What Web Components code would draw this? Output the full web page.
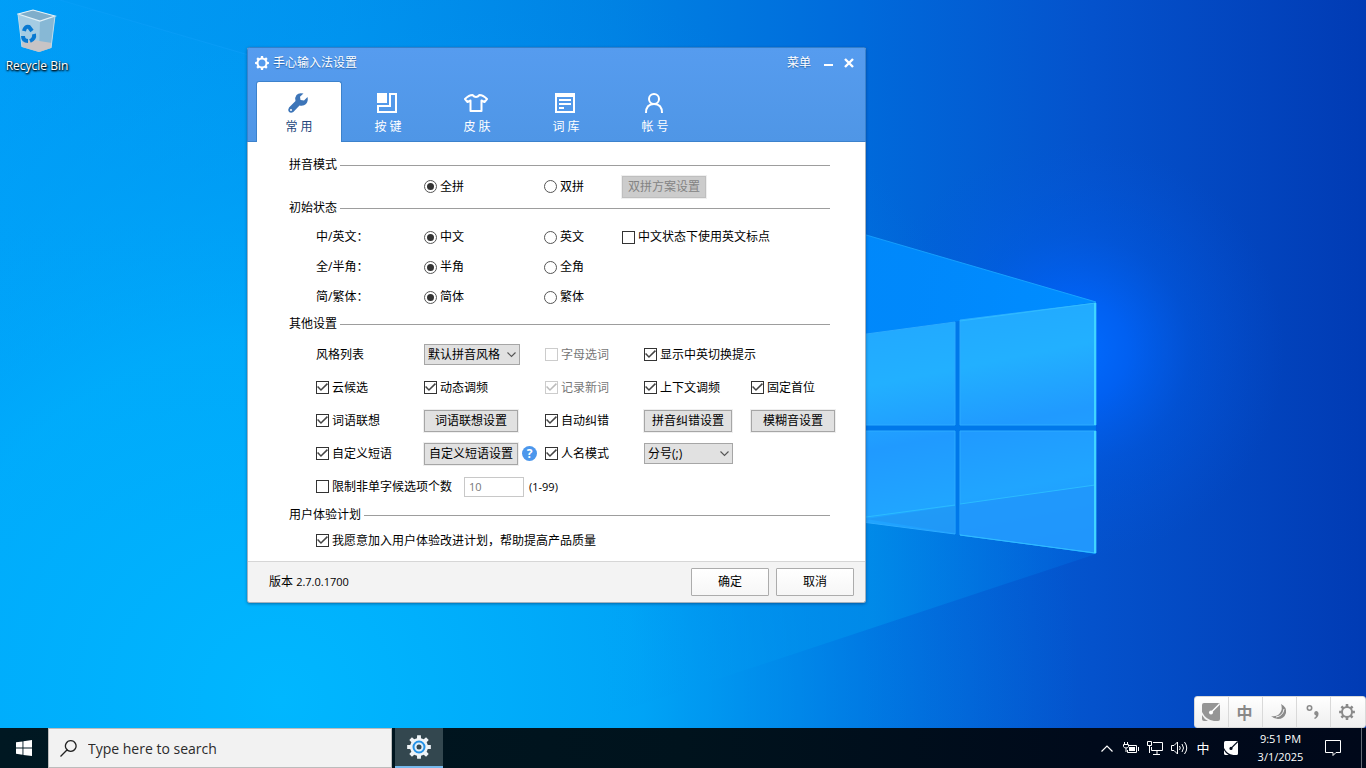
<!DOCTYPE html>
<html lang="zh-CN">
<head>
<meta charset="utf-8">
<title>手心输入法设置</title>
<style>
    html, body {
        height: 100%;
        margin: 0;
    }

    body {
        font-family: "Open Sans", "Noto Sans CJK SC", sans-serif;
        font-size: 12px;
        overflow: hidden;
    }

    .latin { font-size: 11px; }
</style>
</head>
<body>

<desktop-shell>
    <desktop-wallpaper slot="wallpaper"></desktop-wallpaper>
    <desktop-icon slot="icons">Recycle Bin</desktop-icon>

    <settings-window slot="windows">
        <span slot="title">手心输入法设置</span>
        <tab-item slot="tabs" icon="wrench" selected>常 用</tab-item>
        <tab-item slot="tabs" icon="keys">按 键</tab-item>
        <tab-item slot="tabs" icon="shirt">皮 肤</tab-item>
        <tab-item slot="tabs" icon="book">词 库</tab-item>
        <tab-item slot="tabs" icon="user">帐 号</tab-item>

        <settings-group heading="拼音模式">
            <settings-row size="small">
                <span></span>
                <choice-box type="radio" name="mode" checked>全拼</choice-box>
                <choice-box type="radio" name="mode">双拼</choice-box>
                <push-button size="m" disabled>双拼方案设置</push-button>
            </settings-row>
        </settings-group>

        <settings-group heading="初始状态" spaced>
            <settings-row size="medium">
                <span>中/英文：</span>
                <choice-box type="radio" name="lang" checked>中文</choice-box>
                <choice-box type="radio" name="lang">英文</choice-box>
                <choice-box>中文状态下使用英文标点</choice-box>
            </settings-row>
            <settings-row size="medium">
                <span>全/半角：</span>
                <choice-box type="radio" name="width" checked>半角</choice-box>
                <choice-box type="radio" name="width">全角</choice-box>
            </settings-row>
            <settings-row size="medium">
                <span>简/繁体：</span>
                <choice-box type="radio" name="script" checked>简体</choice-box>
                <choice-box type="radio" name="script">繁体</choice-box>
            </settings-row>
        </settings-group>

        <settings-group heading="其他设置" spaced>
            <settings-row columns="five">
                <span>风格列表</span>
                <drop-down label="风格列表" options="默认拼音风格" size="l"></drop-down>
                <choice-box disabled>字母选词</choice-box>
                <choice-box checked>显示中英切换提示</choice-box>
            </settings-row>
            <settings-row columns="five">
                <choice-box checked>云候选</choice-box>
                <choice-box checked>动态调频</choice-box>
                <choice-box checked disabled>记录新词</choice-box>
                <choice-box checked>上下文调频</choice-box>
                <choice-box checked>固定首位</choice-box>
            </settings-row>
            <settings-row columns="five">
                <choice-box checked>词语联想</choice-box>
                <push-button size="l">词语联想设置</push-button>
                <choice-box checked>自动纠错</choice-box>
                <push-button>拼音纠错设置</push-button>
                <push-button size="m">模糊音设置</push-button>
            </settings-row>
            <settings-row columns="five">
                <choice-box checked>自定义短语</choice-box>
                <push-button size="l" help>自定义短语设置</push-button>
                <choice-box checked>人名模式</choice-box>
                <drop-down label="人名模式" options="分号(;)"></drop-down>
            </settings-row>
            <settings-row columns="fields">
                <choice-box>限制非单字候选项个数</choice-box>
                <number-field label="限制非单字候选项个数" value="10"></number-field>
                <span class="latin">(1-99)</span>
            </settings-row>
        </settings-group>

        <settings-group heading="用户体验计划">
            <settings-row columns="one">
                <choice-box checked>我愿意加入用户体验改进计划，帮助提高产品质量</choice-box>
            </settings-row>
        </settings-group>

        <span slot="version">版本 <span class="latin">2.7.0.1700</span></span>
        <dialog-button slot="actions">确定</dialog-button>
        <dialog-button slot="actions">取消</dialog-button>
    </settings-window>

    <ime-bar slot="windows"></ime-bar>
    <task-bar slot="taskbar"></task-bar>
</desktop-shell>

<script>
const base = /*css*/`
    * { box-sizing: border-box; }
    button, input, select { font: inherit; color: inherit; margin: 0; }
    svg { display: block; flex: none; }
`;

const define = (name, render, ready) => {
    customElements.define(name, class extends HTMLElement {
        constructor() {
            super();
            this.attachShadow({mode: "open"});
        }
        connectedCallback() {
            this.shadowRoot.innerHTML = render(this);
            if (ready) ready(this);
        }
    });
};

/* toothed wheel, used at several sizes */
const gearPath = (teeth, outer, inner, cx, cy) => {
    const pts = [];
    const step = Math.PI * 2 / teeth;
    for (let i = 0; i < teeth; i++) {
        const mid = i * step - Math.PI / 2;
        [[-0.29, inner], [-0.2, outer], [0.2, outer], [0.29, inner]].forEach(([t, r]) => {
            const a = mid + t * step;
            pts.push(`${(cx + r * Math.cos(a)).toFixed(2)} ${(cy + r * Math.sin(a)).toFixed(2)}`);
        });
    }
    return `M${pts.join("L")}Z`;
};

const imeLogo = (size, fill, cut) => `
    <svg width="${size}" height="${size}" viewBox="0 0 18 18">
        <path fill="${fill}" d="M2 0H16Q18 0 18 2V16Q18 18 16 18H12Q4 17 0 9V2Q0 0 2 0Z"/>
        <path fill="${fill}" d="M0 12Q2 16 6 18H2Q0 18 0 16Z"/>
        <circle cx="9" cy="9.500" r="2" fill="${cut}"/>
        <path stroke="${cut}" stroke-width="1.500" d="M9 9.500L17.500 1"/>
    </svg>`;

define("desktop-shell", () => `
    <style>
        ${base}
        :host {
            display: flex;
            flex-direction: column;
            height: 100vh;
            position: relative;
        }
        .area { flex: 1; min-height: 0; }
    </style>
    <slot name="wallpaper"></slot>
    <div class="area">
        <slot name="icons"></slot>
        <slot name="windows"></slot>
    </div>
    <slot name="taskbar"></slot>
`);

define("desktop-wallpaper", () => `
    <style>
        :host { position: absolute; inset: 0; z-index: -1; }
        svg { width: 100%; height: 100%; display: block; }
    </style>
    <svg viewBox="0 0 1366 768" preserveAspectRatio="xMidYMid slice">
        <defs>
            <linearGradient id="sky" x1="0" y1="0" x2="1366" y2="0" gradientUnits="userSpaceOnUse">
                <stop offset="0" stop-color="#009ff7"/>
                <stop offset=".25" stop-color="#0094ee"/>
                <stop offset=".45" stop-color="#0082e3"/>
                <stop offset=".63" stop-color="#006adb"/>
                <stop offset=".8" stop-color="#0452cc"/>
                <stop offset="1" stop-color="#013bb4"/>
            </linearGradient>
            <radialGradient id="pool" cx="280" cy="700" r="800" gradientUnits="userSpaceOnUse">
                <stop offset="0" stop-color="#00b7ff"/>
                <stop offset=".45" stop-color="#00b0fd" stop-opacity=".75"/>
                <stop offset=".75" stop-color="#009cf5" stop-opacity=".3"/>
                <stop offset="1" stop-color="#0080ee" stop-opacity="0"/>
            </radialGradient>
            <radialGradient id="glow" cx="1075" cy="350" r="210" gradientUnits="userSpaceOnUse">
                <stop offset="0" stop-color="#006cff"/>
                <stop offset=".25" stop-color="#0066ff" stop-opacity=".75"/>
                <stop offset=".55" stop-color="#0060f4" stop-opacity=".3"/>
                <stop offset="1" stop-color="#0058e0" stop-opacity="0"/>
            </radialGradient>
            <linearGradient id="beam" x1="1096" y1="0" x2="300" y2="0" gradientUnits="userSpaceOnUse">
                <stop offset="0" stop-color="#008dff"/>
                <stop offset=".35" stop-color="#008cff" stop-opacity=".85"/>
                <stop offset="1" stop-color="#00a8ff" stop-opacity=".1"/>
            </linearGradient>
            <linearGradient id="low" x1="1096" y1="0" x2="600" y2="0" gradientUnits="userSpaceOnUse">
                <stop offset="0" stop-color="#0068e0" stop-opacity=".4"/>
                <stop offset=".45" stop-color="#008eea" stop-opacity=".8"/>
                <stop offset="1" stop-color="#00a0f5" stop-opacity="0"/>
            </linearGradient>
            <linearGradient id="pane" x1="960" y1="302" x2="1010" y2="554" gradientUnits="userSpaceOnUse">
                <stop offset="0" stop-color="#22a8ff"/>
                <stop offset=".25" stop-color="#22b0ff"/>
                <stop offset=".5" stop-color="#209aff"/>
                <stop offset=".75" stop-color="#20a5ff"/>
                <stop offset="1" stop-color="#2096fc"/>
            </linearGradient>
            <linearGradient id="ray" x1="1096" y1="302" x2="60" y2="0" gradientUnits="userSpaceOnUse">
                <stop offset="0" stop-color="#18a4ff"/>
                <stop offset="1" stop-color="#18a4ff" stop-opacity=".2"/>
            </linearGradient>
        </defs>
        <rect width="1366" height="768" fill="url(#sky)"/>
        <rect width="1366" height="768" fill="url(#pool)"/>
        <rect width="1366" height="768" fill="url(#glow)"/>
        <path fill="url(#beam)" d="M1096 302L60 0H0V520H866L1096 554Z"/>
        <path fill="url(#low)" d="M1096 554L866 520L600 560V718Z"/>
        <path fill="none" stroke="url(#ray)" d="M1096 302L60 0"/>
        <path fill="#0078ea" d="M866 334L1096 302V554L866 522Z"/>
        <g fill="url(#pane)" stroke="#2cabff">
            <path d="M800 343L955 322V425H800Z"/>
            <path d="M960 320L1096 303V425H960Z"/>
            <path d="M800 431H955V534L800 514Z"/>
            <path d="M960 431H1096V553L960 535Z"/>
        </g>
        <path fill="#2196f3" fill-opacity=".7" d="M866 519L955 506V533Z"/>
        <path fill="#2196fb" fill-opacity=".8" d="M960 504L1095 485V552L960 534Z"/>
        <path fill="none" stroke="#2bbcff" d="M866 517L955 505M960 504L1095 485"/>
        <path fill="none" stroke="#30bcff" d="M960 321L1096 303M1095 553L960 535"/>
        <path fill="none" stroke="#40d4ff" stroke-width="2" d="M1095 303V425M1095 431V553"/>
    </svg>
`);

define("desktop-icon", () => `
    <style>
        :host {
            display: flex;
            flex-direction: column;
            align-items: center;
            gap: 3px;
            width: 74px;
            padding-top: 8px;
            color: #fff;
            font-size: 12px;
            line-height: 18px;
            text-shadow: 0 1px 2px #000, 1px 1px 2px #000;
            white-space: nowrap;
        }
    </style>
    <svg width="40" height="46" viewBox="0 0 40 46">
        <path fill="#a5cce3" d="M1 6L16 2L38 8L34 40L22 44L5 39Z"/>
        <path fill="#7faecb" d="M1 6L16 2L38 8L23 13Z"/>
        <path fill="#87b8d5" d="M23 13L38 8L34 40L22 44Z"/>
        <path fill="#c7c4c5" d="M4 35L16 32L35 35L34 40L22 44L5 39Z"/>
        <path fill="none" stroke="#e2f1f8" stroke-width="1.200" d="M1 6L16 2L38 8L23 13Z"/>
        <path fill="none" stroke="#bcdcec" d="M1 6L5 39M34 40L38 8"/>
        <g fill="none" stroke="#0879d1" stroke-width="4">
            <path d="M7 23Q8 18 12 19L15 23"/>
            <path d="M17 26Q18 31 13 33"/>
            <path d="M11 33Q6 33 6 28"/>
        </g>
    </svg>
    <slot></slot>
`);

define("settings-window", () => `
    <style>
        ${base}
        :host {
            position: absolute;
            left: 247px;
            top: 47px;
            width: 619px;
            box-sizing: border-box;
            border: 1px solid #a4b2be;
            border-top-color: #347fc9;
            border-radius: 3px;
            background: #fff;
            color: #000;
            font-family: "Open Sans", "Noto Sans CJK SC", sans-serif;
            font-size: 12px;
            line-height: 18px;
            box-shadow: 0 1px 3px rgba(0, 30, 80, .45);
        }
        header {
            margin: 0 -1px;
            background: linear-gradient(#569cef, #4f96e6);
            border: 1px solid #3c82cc;
            border-top: 0;
            border-radius: 2px 2px 0 0;
            color: #fff;
        }
        .bar {
            display: flex;
            align-items: center;
            height: 30px;
            padding: 0 8px 0 7px;
            gap: 4px;
            text-shadow: 0 1px 1px #2b65aa;
        }
        .bar .title { flex: 1; }
        .bar button {
            background: none;
            border: 0;
            padding: 0;
            height: 18px;
            text-shadow: inherit;
        }
        .bar .icon {
            width: 16px;
            display: flex;
            align-items: center;
            justify-content: center;
        }
        .bar .menu { margin-right: 6px; }
        nav {
            display: flex;
            gap: 3px;
            padding: 3px 8px 0;
            margin-bottom: -1px;
        }
        main { padding: 14px 35px 4px 41px; }
        footer {
            display: flex;
            align-items: center;
            gap: 7px;
            height: 41px;
            padding: 0 11px 0 21px;
            background: #f3f3f3;
            border-top: 1px solid #d6d6d6;
            border-radius: 0 0 3px 3px;
        }
        .version { flex: 1; }
    </style>
    <header>
        <div class="bar">
            <svg width="14" height="14" viewBox="0 0 14 14">
                <path fill="#fff" fill-rule="evenodd" d="${gearPath(8, 7, 5.5, 7, 7)}M7 3.500A3.500 3.500 0 1 0 7 10.500A3.500 3.500 0 1 0 7 3.500Z"/>
            </svg>
            <span class="title"><slot name="title"></slot></span>
            <button class="menu">菜单</button>
            <button class="icon" aria-label="最小化">
                <svg width="10" height="10"><path fill="#fff" d="M0 6H9V8H0Z"/></svg>
            </button>
            <button class="icon" aria-label="关闭">
                <svg width="10" height="10"><path stroke="#fff" stroke-width="2.400" d="M1 1L9 9M9 1L1 9"/></svg>
            </button>
        </div>
        <nav role="tablist"><slot name="tabs"></slot></nav>
    </header>
    <main><slot></slot></main>
    <footer>
        <span class="version"><slot name="version"></slot></span>
        <slot name="actions"></slot>
    </footer>
`);

const tabIcons = {
    wrench: `<path fill="#3d75b8" d="M19.500 4L16 7.500L12.500 7L12 3.800L15.500 .6Q11 -.8 8.500 2Q6.500 4.500 7.500 8L1 14.500Q-.6 17 1 19Q3 20.600 5.300 19L11.500 12.500Q15.500 13.500 18 11Q20.500 8 19.500 4Z"/>
        <circle cx="3" cy="17" r="1" fill="#fff"/>`,
    keys: `<path fill="#fff" d="M0 0H10V10H0Z"/>
        <path fill="none" stroke="#fff" stroke-width="2" d="M13 1H19V19H1V13H13Z"/>`,
    shirt: `<path fill="none" stroke="#fff" stroke-width="2" stroke-linejoin="round" d="M6.500 2Q10 6 13.500 2Q17 2 21 6L18.500 9L15.500 7.500V18H4.500V7.500L1.500 9L-1 6Q3 2 6.500 2Z"/>`,
    book: `<path fill="none" stroke="#fff" stroke-width="2" d="M1 1H19V19H1Z"/>
        <path fill="#fff" d="M0 0H20V4H0ZM4 6H16V8H4ZM4 10H16V12H4ZM4 14H9V16H4Z"/>`,
    user: `<circle cx="10" cy="6" r="5" fill="none" stroke="#fff" stroke-width="2"/>
        <path fill="none" stroke="#fff" stroke-width="2" d="M2 20Q2 11 10 11Q18 11 18 20"/>`
};

define("tab-item", el => `
    <style>
        ${base}
        :host { display: block; }
        button {
            display: flex;
            flex-direction: column;
            align-items: center;
            gap: 5px;
            width: 86px;
            height: 61px;
            padding: 11px 0 0;
            border: 1px solid transparent;
            border-bottom: 0;
            border-radius: 3px 3px 0 0;
            background: none;
            line-height: 18px;
        }
        svg { overflow: visible; margin-right: 2px; }
        :host([selected]) button {
            background: #fff;
            border-color: #3c82cc;
            color: #24477c;
        }
    </style>
    <button role="tab" aria-selected="${el.hasAttribute("selected")}">
        <svg width="20" height="20" viewBox="0 0 20 20">${tabIcons[el.getAttribute("icon")]}</svg>
        <span><slot></slot></span>
    </button>
`);

define("settings-group", el => `
    <style>
        ${base}
        :host { display: block; }
        .heading {
            display: flex;
            align-items: center;
            gap: 3px;
            height: 18px;
        }
        .heading::after {
            content: "";
            flex: 1;
            height: 1px;
            background: #9d9d9d;
        }
        .rows { padding-left: 27px; }
        :host([spaced]) .rows { padding-top: 5px; padding-bottom: 3px; }
    </style>
    <div class="heading">${el.getAttribute("heading")}</div>
    <div class="rows" role="group" aria-label="${el.getAttribute("heading")}"><slot></slot></div>
`);

define("settings-row", () => `
    <style>
        :host {
            display: grid;
            grid-template-columns: 108px 120px 78px 1fr;
            align-items: center;
            height: 33px;
            white-space: nowrap;
        }
        :host([size="small"]) { height: 25px; }
        :host([size="medium"]) { height: 30px; }
        :host([columns="five"]) { grid-template-columns: 108px 121px 99px 107px 1fr; }
        :host([columns="fields"]) { grid-template-columns: 148px 65px 1fr; }
        :host([columns="one"]) { grid-template-columns: 1fr; }
    </style>
    <slot></slot>
`);

define("choice-box", el => `
    <style>
        ${base}
        :host { display: block; }
        label { display: flex; align-items: center; gap: 3px; }
        input {
            appearance: none;
            display: grid;
            place-items: center;
            flex: none;
            width: 13px;
            height: 13px;
            border: 1px solid #333;
            background: #fff;
        }
        input[type="radio"] { border-radius: 50%; border-color: #555; }
        input[type="radio"]:checked::before {
            content: "";
            width: 7px;
            height: 7px;
            border-radius: 50%;
            background: #333;
        }
        input[type="checkbox"]:checked::before {
            content: "";
            width: 11px;
            height: 11px;
            background: #444;
            clip-path: polygon(0 45%, 10% 36%, 36% 64%, 90% 10%, 100% 20%, 36% 82%);
        }
        :host([disabled]) label { color: #777; }
        :host([disabled]) input { border-color: #ccc; }
        :host([disabled]) input::before { background: #bbb !important; }
    </style>
    <label>
        <input type="${el.getAttribute("type") || "checkbox"}"
            ${el.hasAttribute("checked") ? "checked" : ""}
            ${el.hasAttribute("disabled") ? "disabled" : ""}>
        <span><slot></slot></span>
    </label>
`, el => {
    // radios in separate shadow roots do not group by name
    const input = el.shadowRoot.querySelector("input");
    input.addEventListener("change", () => {
        if (input.type !== "radio") return;
        document.querySelectorAll(`choice-box[name="${el.getAttribute("name")}"]`).forEach(other => {
            if (other !== el) other.shadowRoot.querySelector("input").checked = false;
        });
    });
});

define("push-button", el => `
    <style>
        ${base}
        :host {
            display: flex;
            align-items: center;
            gap: 4px;
            --width: 88px;
        }
        :host([size="m"]) { --width: 84px; }
        :host([size="l"]) { --width: 94px; }
        button {
            width: var(--width);
            height: 22px;
            padding: 0;
            border: 1px solid #a6a6a6;
            background: #e1e1e1;
            box-shadow: 0 0 0 1px #efefef;
            line-height: 18px;
        }
        button:disabled {
            color: #838383;
            background: #ccc;
            border-color: #bfbfbf;
        }
        .help {
            width: 15px;
            height: 15px;
            border: 0;
            border-radius: 50%;
            background: #4c97ec;
            box-shadow: none;
            color: #fff;
            font-weight: 700;
            font-size: 12px;
            line-height: 15px;
        }
    </style>
    <button ${el.hasAttribute("disabled") ? "disabled" : ""}><slot></slot></button>
    ${el.hasAttribute("help") ? `<button class="help">?</button>` : ""}
`);

define("drop-down", el => `
    <style>
        ${base}
        :host { display: grid; width: 89px; align-items: center; }
        :host([size="l"]) { width: 96px; }
        select, svg { grid-area: 1 / 1; }
        select {
            appearance: none;
            width: 100%;
            height: 21px;
            padding: 0 3px;
            border: 1px solid #a6a6a6;
            border-radius: 0;
            background: #e1e1e1;
            line-height: 18px;
        }
        svg { justify-self: end; margin-right: 4px; pointer-events: none; }
    </style>
    <select aria-label="${el.getAttribute("label")}">
        <option>${el.getAttribute("options")}</option>
    </select>
    <svg width="9" height="6"><path fill="none" stroke="#555" stroke-width="1.100" d="M.5 .5L4.500 4.500L8.500 .5"/></svg>
`);

define("number-field", el => `
    <style>
        ${base}
        :host { display: block; }
        input {
            display: block;
            width: 60px;
            height: 20px;
            padding: 0 4px;
            border: 1px solid #c8c8c8;
            border-radius: 0;
            background: #fff;
            color: #777;
            font-size: 11px;
        }
    </style>
    <input type="text" inputmode="numeric" aria-label="${el.getAttribute("label")}" value="${el.getAttribute("value")}">
`);

define("dialog-button", () => `
    <style>
        ${base}
        :host { display: block; }
        button {
            width: 78px;
            height: 28px;
            padding: 0;
            border: 1px solid #acacac;
            border-radius: 1px;
            background: linear-gradient(#fff, #f6f6f6);
            line-height: 18px;
        }
    </style>
    <button><slot></slot></button>
`);

define("ime-bar", () => `
    <style>
        ${base}
        :host {
            position: absolute;
            right: 0;
            bottom: 40px;
            display: flex;
            height: 32px;
            border: 1px solid #d9d9d9;
            border-radius: 3px;
            overflow: hidden;
            background: linear-gradient(#fff, #efefef);
            box-sizing: border-box;
            color: #888;
        }
        button {
            display: flex;
            align-items: center;
            justify-content: center;
            width: 34px;
            height: 30px;
            padding: 0 2px 0 0;
            border: 0;
            border-right: 1px solid #d9d9d9;
            background: none;
        }
        button:last-child { border-right: 0; }
        .zh { font: 700 16px/20px "Noto Sans CJK SC", sans-serif; }
    </style>
    <button aria-label="手心输入法">${imeLogo(18, "#959595", "#fff")}</button>
    <button class="zh">中</button>
    <button aria-label="半角">
        <svg width="16" height="16"><path fill="#8b8b8b" d="M10 0Q16 3 15 9Q13 15 7 15Q3 15 0 12Q6 13 9 9Q12 5 10 0Z"/><path stroke="#f4f4f4" d="M5 13Q12 12 13 5" fill="none"/></svg>
    </button>
    <button aria-label="中文标点">
        <svg width="14" height="16"><circle cx="3.500" cy="4" r="2.200" fill="none" stroke="#8b8b8b" stroke-width="1.600"/><path fill="#8b8b8b" d="M10 7A2.500 2.500 0 0 1 12.500 10Q12.500 13 9 15L8 14Q10 13 10 11.500A2.300 2.300 0 0 1 10 7Z"/></svg>
    </button>
    <button aria-label="设置">
        <svg width="16" height="16"><path fill="#8b8b8b" fill-rule="evenodd" d="${gearPath(8, 8, 6, 8, 8)}M8 4A4 4 0 1 0 8 12A4 4 0 1 0 8 4Z"/></svg>
    </button>
`);

define("task-bar", () => `
    <style>
        ${base}
        :host {
            display: flex;
            height: 40px;
            background: linear-gradient(90deg, #001822, #00131d 50%, #000a1b 80%, #00081a);
            color: #fff;
            font-family: "Open Sans", "Noto Sans CJK SC", sans-serif;
        }
        button {
            display: flex;
            align-items: center;
            justify-content: center;
            padding: 0;
            border: 0;
            background: none;
        }
        .start { width: 48px; }
        .search {
            display: flex;
            align-items: center;
            gap: 11px;
            width: 344px;
            padding: 0 11px;
            border: 1px solid #bcbcbc;
            background: #f2f2f2;
        }
        .search input {
            flex: 1;
            min-width: 0;
            padding: 0;
            border: 0;
            outline: 0;
            background: none;
            font-size: 14px;
        }
        .search input::placeholder { color: #2b2b2b; opacity: 1; }
        .app {
            width: 48px;
            margin-left: 3px;
            background: #33474f;
            border-bottom: 2px solid #76b9ed;
        }
        .tray { display: flex; margin-left: auto; }
        .tray button { width: 24px; }
        .tray .zh { font: 13px/20px "Noto Sans CJK SC", sans-serif; }
        .tray .ime { width: 32px; }
        .tray .clock {
            flex-direction: column;
            width: 67px;
            font-size: 11px;
            line-height: 18px;
        }
        .tray .notes { width: 38px; }
        .tray .show {
            width: 5px;
            margin-left: 9px;
            border-left: 1px solid #646b76;
        }
    </style>
    <button class="start" aria-label="Start">
        <svg width="16" height="16"><path fill="#fff" d="M0 2.300L6.500 1.400V7.600H0ZM7.400 1.200L16 0V7.600H7.400ZM0 8.500H6.500V14.700L0 13.800ZM7.400 8.500H16V16L7.400 14.900Z"/></svg>
    </button>
    <label class="search">
        <svg width="17" height="17"><path fill="none" stroke="#222" stroke-width="1.300" d="M6.700 10.300L.5 16.500M10.800 .7A5.300 5.300 0 1 1 10.700 .7Z"/></svg>
        <input type="text" placeholder="Type here to search" aria-label="Type here to search">
    </label>
    <button class="app" aria-label="手心输入法设置">
        <svg width="24" height="24">
            <path fill="#eef3f6" d="${gearPath(8, 12, 9, 12, 12)}"/>
            <circle cx="12" cy="12" r="5.500" fill="#dfeffb" stroke="#2492e6" stroke-width="2"/>
            <circle cx="12" cy="12" r="2.500" fill="#33474f"/>
        </svg>
    </button>
    <div class="tray">
        <button aria-label="Show hidden icons">
            <svg width="12" height="7"><path fill="none" stroke="#fff" stroke-width="1.200" d="M.5 6.500L6 1L11.500 6.500"/></svg>
        </button>
        <button aria-label="Power">
            <svg width="16" height="12"><path fill="none" stroke="#fff" d="M6 3.500H13.500V10.500H4.500V8M15.500 5V9M1.500 0V2M4.500 0V2M.5 2.500H5.500V4.500Q5 6 3 6Q1 6 .5 4.500ZM3 6V10"/><path fill="#fff" d="M6 5H12V9H6Z"/></svg>
        </button>
        <button aria-label="Network">
            <svg width="16" height="14"><path fill="none" stroke="#fff" d="M6 1.500H15.500V9.500H4.500V6M10 9.500V13M6 13.500H13M.5 .5H4.500V4.500H.5ZM2.500 4.500V12"/></svg>
        </button>
        <button aria-label="Volume">
            <svg width="17" height="14"><path fill="none" stroke="#fff" d="M.5 4.500H3L6.500 1V13L3 9.500H.5ZM8.500 5Q10 7 8.500 9M11 3Q14 7 11 11M13.500 1Q18 7 13.500 13"/></svg>
        </button>
        <button class="zh">中</button>
        <button class="ime" aria-label="手心输入法">${imeLogo(14, "#fff", "#000a1b")}</button>
        <button class="clock"><span>9:51 PM</span><span>3/1/2025</span></button>
        <button class="notes" aria-label="Notifications">
            <svg width="16" height="16"><path fill="none" stroke="#fff" d="M.5 .5H15.500V12.500H11L8 15.500V12.500H.5Z"/></svg>
        </button>
        <button class="show" aria-label="Show desktop"></button>
    </div>
`);
</script>
</body>
</html>
